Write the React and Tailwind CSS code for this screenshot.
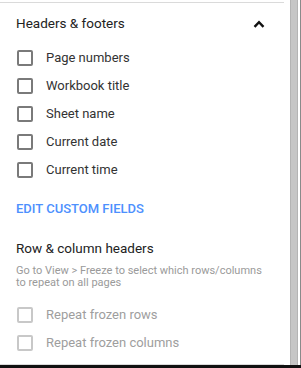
import React from 'react';

const Checkbox = ({ label, disabled }) => (
  <div className="flex items-center h-[28px]">
    <span
      className={`ml-[17px] w-[16px] h-[16px] rounded-[2px] border-2 ${
        disabled ? 'border-[#c8c8c8]' : 'border-[#7a7a7a]'
      }`}
    />
    <span className={`ml-[13px] text-[13px] ${disabled ? 'text-[#9e9e9e]' : 'text-[#333333]'}`}>
      {label}
    </span>
  </div>
);

const App = () => {
  const fields = ['Page numbers', 'Workbook title', 'Sheet name', 'Current date', 'Current time'];

  return (
    <div className="w-[301px] h-[368px] bg-white flex flex-col overflow-hidden font-['Roboto',sans-serif]">
      <div className="flex flex-1">
        {/* Panel */}
        <div className="w-[284px] pt-[2px] flex flex-col">
          <div className="border-t border-[#dadada]" />

          {/* Header */}
          <div className="h-[41px] flex items-center justify-between pl-[16px] pr-[19px]">
            <span className="text-[13.5px] text-[#222222]">Headers &amp; footers</span>
            <svg width="12" height="8" viewBox="0 0 12 8">
              <path d="M1.5 6.8 L6 2.2 L10.5 6.8" fill="none" stroke="#111" strokeWidth="2.4" />
            </svg>
          </div>

          {fields.map((f) => (
            <Checkbox key={f} label={f} />
          ))}

          <div className="h-[50px] flex items-center pl-[16px]">
            <span className="text-[13px] font-medium text-[#4d90fe]">EDIT CUSTOM FIELDS</span>
          </div>

          <div className="h-[28px] flex items-center pl-[16px]">
            <span className="text-[13.5px] text-[#222222]">Row &amp; column headers</span>
          </div>

          <p className="mt-[3px] pl-[16px] pr-[18px] text-[11px] leading-[12px] text-[#9a9a9a]">
            Go to View &gt; Freeze to select which rows/columns to repeat on all pages
          </p>

          <div className="mt-[12px]">
            <Checkbox label="Repeat frozen rows" disabled />
            <Checkbox label="Repeat frozen columns" disabled />
          </div>

          <div className="flex-1" />
          <div className="border-t border-[#dadada]" />
        </div>

        {/* Scrollbar */}
        <div className="flex-1 flex pl-[6px]">
          <div className="w-[8px] bg-[#c6c6c6] border-x border-[#b4b4b4]" />
          <div className="w-[2px]" />
          <div className="w-[1px] bg-[#8a8a8a]" />
        </div>
      </div>
      <div className="h-[3px] bg-[#111111]" />
    </div>
  );
};

export default App;
